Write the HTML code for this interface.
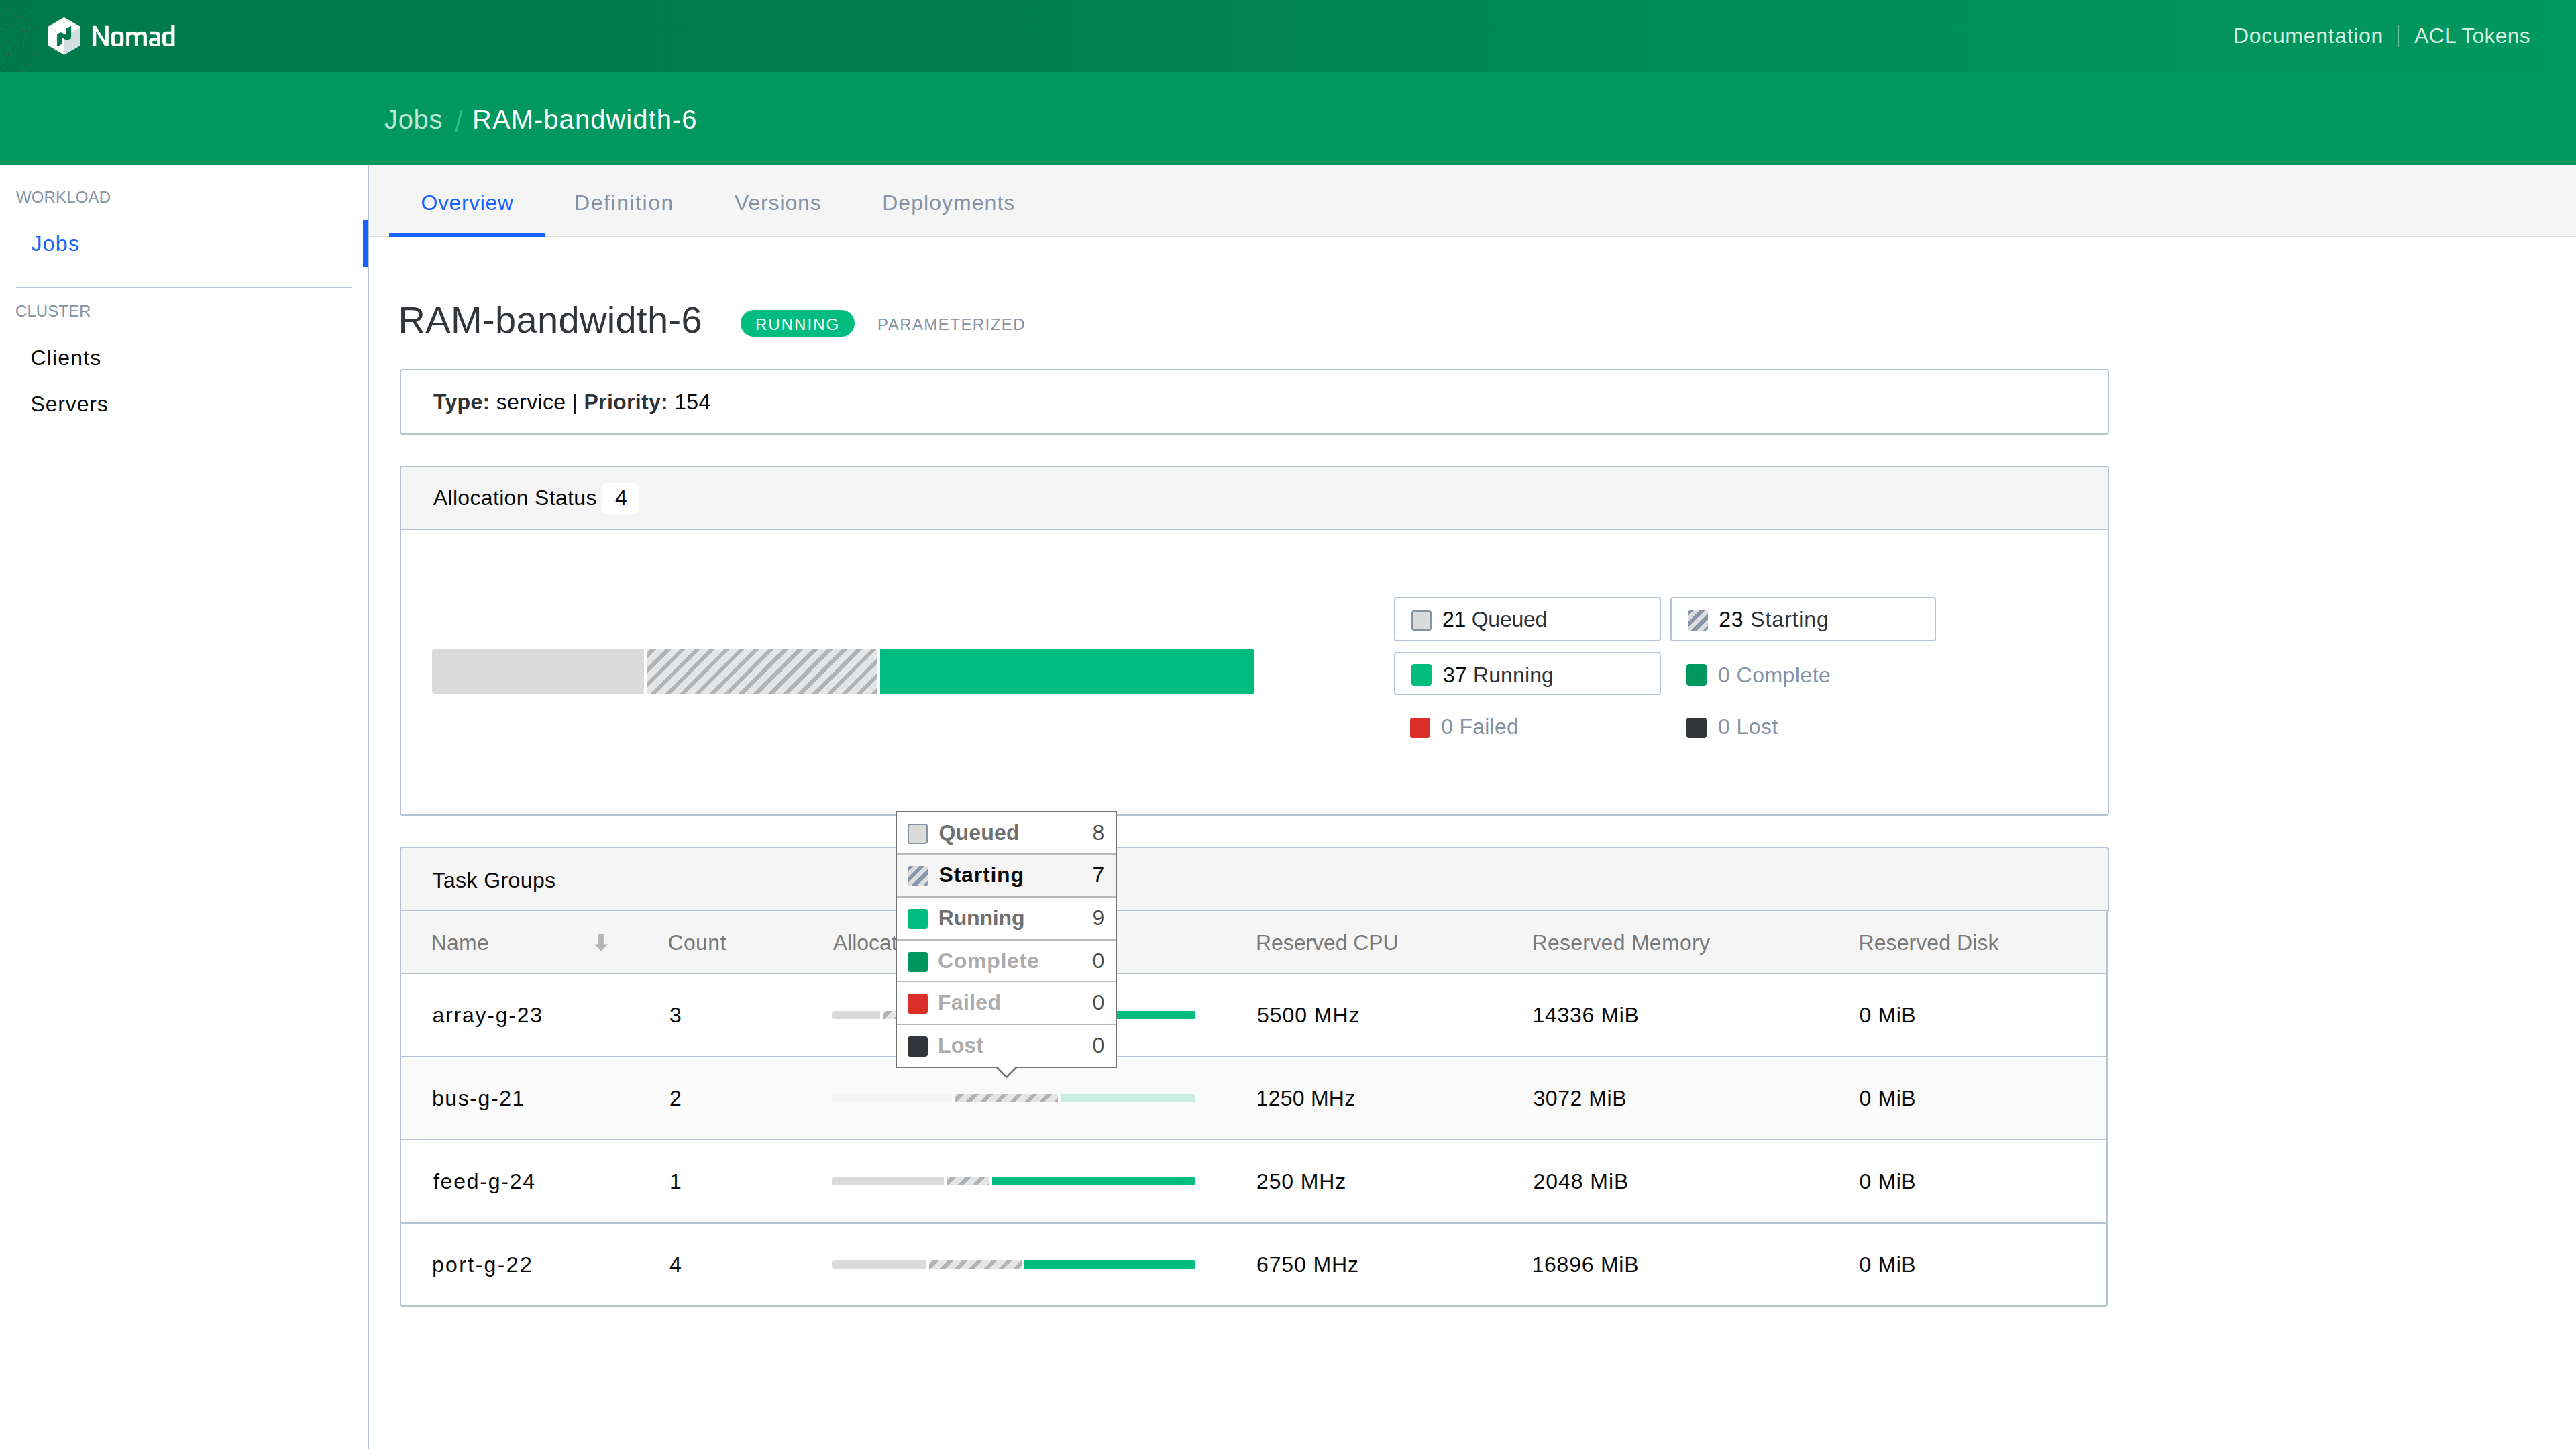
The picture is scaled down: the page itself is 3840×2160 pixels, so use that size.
<!DOCTYPE html>
<html><head><meta charset="utf-8"><style>
html,body{margin:0;padding:0;}
body{width:3840px;height:2160px;overflow:hidden;position:relative;background:#fff;font-family:"Liberation Sans", sans-serif;}
.t{position:absolute;white-space:nowrap;}
.r{position:absolute;}
@media (max-width: 2000px) { body { zoom: 0.5; } }

</style></head><body>
<div class="r" style="left:0px;top:0px;width:3840px;height:108px;background:linear-gradient(to right,#007a4d 0%,#007c4e 30%,#008d58 70%,#00985f 100%);"></div>
<div class="r" style="left:0px;top:108px;width:3840px;height:138px;background:#00985f;"></div>
<svg class="r" style="left:0;top:0" width="56" height="108" viewBox="0 0 56 108"><g fill="#3a3d3b" fill-opacity="0.9"><rect x="4" y="5" width="1" height="1"/><rect x="12" y="5" width="1" height="1"/><rect x="19" y="6" width="1" height="1"/><rect x="25" y="6" width="1" height="1"/><rect x="32" y="6" width="1" height="1"/><rect x="39" y="5" width="1" height="1"/><rect x="47" y="7" width="1" height="1"/><rect x="4" y="10" width="1" height="1"/><rect x="12" y="12" width="1" height="1"/><rect x="19" y="11" width="1" height="1"/><rect x="27" y="10" width="1" height="1"/><rect x="34" y="10" width="1" height="1"/><rect x="39" y="10" width="1" height="1"/><rect x="46" y="12" width="1" height="1"/><rect x="4" y="16" width="1" height="1"/><rect x="12" y="16" width="1" height="1"/><rect x="19" y="15" width="1" height="1"/><rect x="25" y="15" width="1" height="1"/><rect x="34" y="16" width="1" height="1"/><rect x="39" y="16" width="1" height="1"/><rect x="47" y="15" width="1" height="1"/><rect x="6" y="22" width="1" height="1"/><rect x="11" y="21" width="1" height="1"/><rect x="19" y="22" width="1" height="1"/><rect x="27" y="20" width="1" height="1"/><rect x="34" y="20" width="1" height="1"/><rect x="40" y="22" width="1" height="1"/><rect x="46" y="21" width="1" height="1"/><rect x="4" y="27" width="1" height="1"/><rect x="13" y="26" width="1" height="1"/><rect x="20" y="25" width="1" height="1"/><rect x="27" y="26" width="1" height="1"/><rect x="33" y="26" width="1" height="1"/><rect x="41" y="27" width="1" height="1"/><rect x="47" y="26" width="1" height="1"/><rect x="4" y="32" width="1" height="1"/><rect x="12" y="32" width="1" height="1"/><rect x="20" y="30" width="1" height="1"/><rect x="26" y="32" width="1" height="1"/><rect x="32" y="31" width="1" height="1"/><rect x="39" y="30" width="1" height="1"/><rect x="46" y="32" width="1" height="1"/><rect x="4" y="35" width="1" height="1"/><rect x="12" y="37" width="1" height="1"/><rect x="18" y="36" width="1" height="1"/><rect x="26" y="37" width="1" height="1"/><rect x="34" y="37" width="1" height="1"/><rect x="39" y="36" width="1" height="1"/><rect x="47" y="37" width="1" height="1"/><rect x="6" y="40" width="1" height="1"/><rect x="11" y="40" width="1" height="1"/><rect x="18" y="41" width="1" height="1"/><rect x="26" y="40" width="1" height="1"/><rect x="32" y="41" width="1" height="1"/><rect x="40" y="41" width="1" height="1"/><rect x="48" y="42" width="1" height="1"/><rect x="5" y="46" width="1" height="1"/><rect x="13" y="45" width="1" height="1"/><rect x="20" y="47" width="1" height="1"/><rect x="27" y="47" width="1" height="1"/><rect x="33" y="46" width="1" height="1"/><rect x="39" y="46" width="1" height="1"/><rect x="46" y="45" width="1" height="1"/><rect x="4" y="50" width="1" height="1"/><rect x="12" y="50" width="1" height="1"/><rect x="18" y="50" width="1" height="1"/><rect x="25" y="51" width="1" height="1"/><rect x="32" y="52" width="1" height="1"/><rect x="40" y="50" width="1" height="1"/><rect x="46" y="51" width="1" height="1"/><rect x="5" y="55" width="1" height="1"/><rect x="13" y="57" width="1" height="1"/><rect x="19" y="56" width="1" height="1"/><rect x="25" y="55" width="1" height="1"/><rect x="33" y="55" width="1" height="1"/><rect x="41" y="55" width="1" height="1"/><rect x="46" y="57" width="1" height="1"/><rect x="5" y="60" width="1" height="1"/><rect x="12" y="60" width="1" height="1"/><rect x="19" y="62" width="1" height="1"/><rect x="27" y="62" width="1" height="1"/><rect x="32" y="61" width="1" height="1"/><rect x="39" y="62" width="1" height="1"/><rect x="47" y="62" width="1" height="1"/><rect x="4" y="65" width="1" height="1"/><rect x="13" y="67" width="1" height="1"/><rect x="20" y="67" width="1" height="1"/><rect x="27" y="67" width="1" height="1"/><rect x="32" y="66" width="1" height="1"/><rect x="40" y="65" width="1" height="1"/><rect x="46" y="65" width="1" height="1"/><rect x="4" y="72" width="1" height="1"/><rect x="13" y="71" width="1" height="1"/><rect x="20" y="72" width="1" height="1"/><rect x="27" y="71" width="1" height="1"/><rect x="32" y="70" width="1" height="1"/><rect x="39" y="70" width="1" height="1"/><rect x="47" y="72" width="1" height="1"/><rect x="6" y="76" width="1" height="1"/><rect x="12" y="77" width="1" height="1"/><rect x="18" y="76" width="1" height="1"/><rect x="27" y="77" width="1" height="1"/><rect x="34" y="76" width="1" height="1"/><rect x="39" y="77" width="1" height="1"/><rect x="46" y="77" width="1" height="1"/><rect x="6" y="81" width="1" height="1"/><rect x="12" y="82" width="1" height="1"/><rect x="20" y="80" width="1" height="1"/><rect x="25" y="80" width="1" height="1"/><rect x="34" y="82" width="1" height="1"/><rect x="39" y="82" width="1" height="1"/><rect x="48" y="81" width="1" height="1"/><rect x="5" y="86" width="1" height="1"/><rect x="11" y="85" width="1" height="1"/><rect x="20" y="86" width="1" height="1"/><rect x="26" y="87" width="1" height="1"/><rect x="33" y="87" width="1" height="1"/><rect x="41" y="85" width="1" height="1"/><rect x="46" y="85" width="1" height="1"/><rect x="4" y="91" width="1" height="1"/><rect x="11" y="91" width="1" height="1"/><rect x="18" y="92" width="1" height="1"/><rect x="26" y="91" width="1" height="1"/><rect x="33" y="92" width="1" height="1"/><rect x="40" y="92" width="1" height="1"/><rect x="47" y="91" width="1" height="1"/><rect x="5" y="95" width="1" height="1"/><rect x="12" y="95" width="1" height="1"/><rect x="18" y="97" width="1" height="1"/><rect x="25" y="96" width="1" height="1"/><rect x="34" y="96" width="1" height="1"/><rect x="39" y="96" width="1" height="1"/><rect x="47" y="97" width="1" height="1"/><rect x="4" y="101" width="1" height="1"/><rect x="11" y="100" width="1" height="1"/><rect x="20" y="101" width="1" height="1"/><rect x="26" y="102" width="1" height="1"/><rect x="34" y="101" width="1" height="1"/><rect x="40" y="101" width="1" height="1"/><rect x="47" y="102" width="1" height="1"/><rect x="5" y="106" width="1" height="1"/><rect x="12" y="107" width="1" height="1"/><rect x="20" y="107" width="1" height="1"/><rect x="27" y="105" width="1" height="1"/><rect x="33" y="107" width="1" height="1"/><rect x="41" y="105" width="1" height="1"/><rect x="46" y="106" width="1" height="1"/></g></svg>
<svg class="r" style="left:70px;top:25px" width="52" height="58" viewBox="70 25 52 58">
<polygon points="95.5,25.8 119.9,40 119.9,67.6 95.5,81.8 71.4,67.6 71.4,40" fill="#ffffff"/>
<polygon points="95.5,54.5 119.9,40.3 119.9,67.6 95.5,81.8" fill="#d3dfdf"/>
<line x1="72" y1="40.5" x2="86" y2="48.5" stroke="#cfd8dc" stroke-width="0.9"/>
<polygon points="85.1,50.9 90.4,48 98.6,51.6 98.6,42.2 106.1,38.8 106.1,57.2 99.6,59.9 92.1,56 92.1,65.7 85.1,69.5" fill="#007a4d"/>
</svg>
<svg class="r" style="left:134px;top:34px" width="130" height="38" viewBox="134 34 130 38"><g fill="#ffffff" fill-rule="evenodd">
<path d="M137.9,38.7 H143.2 L156.4,60.6 V38.7 H161.8 V68.9 H156.5 L143.3,47 V68.9 H137.9 Z"/>
<path d="M172,46.8 H178.2 Q184.3,46.8 184.3,53 V62.9 Q184.3,69.1 178.2,69.1 H172 Q165.9,69.1 165.9,62.9 V53 Q165.9,46.8 172,46.8 Z M173.4,51.2 Q170.8,51.2 170.8,53.8 V62.2 Q170.8,64.8 173.4,64.8 H176.6 Q179.2,64.8 179.2,62.2 V53.8 Q179.2,51.2 176.6,51.2 Z"/>
<path d="M188.2,68.9 V47.2 H193.1 V48.6 Q195.2,46.8 198.8,46.8 Q202.6,46.8 204.3,48.8 Q206.6,46.8 211,46.8 Q218.9,46.8 218.9,53.6 V68.9 H213.7 V54.4 Q213.7,51.4 210.8,51.4 Q208,51.4 205.8,53 V68.9 H200.9 V54.4 Q200.9,51.4 198,51.4 Q195.3,51.4 193.1,53 V68.9 Z"/>
<path d="M223.4,46.8 H232.6 Q239,46.8 239,53.4 V68.9 H234.4 V67.4 Q232.4,69.1 228.6,69.1 Q222.1,69.1 222.1,62.8 Q222.1,56.6 228.6,56.6 H234.1 V53.6 Q234.1,51.2 231.6,51.2 H223.4 Z M229.2,60.7 Q226.8,60.7 226.8,62.8 Q226.8,64.9 229.2,64.9 H234.1 V60.7 Z"/>
<path d="M248.2,46.8 H255.3 V38 L260.4,37 V68.9 H248.2 Q242,68.9 242,62.6 V53.1 Q242,46.8 248.2,46.8 Z M250,51.2 Q247.3,51.2 247.3,53.9 V62.1 Q247.3,64.7 250,64.7 H255.3 V51.2 Z"/>
</g></svg>
<div class="t" id="doc" style="left:3329.00px;top:36.91px;font-size:32px;line-height:32px;color:#d3eee2;letter-spacing:0.667px;">Documentation</div>
<div class="r" style="left:3574px;top:38px;width:2px;height:32px;background:#6fc6a0;"></div>
<div class="t" id="acl" style="left:3599.00px;top:36.91px;font-size:32px;line-height:32px;color:#d3eee2;letter-spacing:0.222px;">ACL Tokens</div>
<div class="t" id="crumbjobs" style="left:573.00px;top:157.84px;font-size:40px;line-height:40px;color:#bfe6d5;letter-spacing:0.666px;">Jobs</div>
<svg class="r" style="left:674px;top:160px" width="20" height="42" viewBox="674 160 20 42"><polygon points="686.6,164 689.8,164 681.2,197 678,197" fill="#22c38a"/></svg>
<div class="t" id="crumbram" style="left:704.00px;top:157.84px;font-size:40px;line-height:40px;color:#ffffff;letter-spacing:1.030px;">RAM-bandwidth-6</div>
<div class="r" style="left:548px;top:246px;width:2px;height:1914px;background:#b6c2d2;"></div>
<div class="t" id="workload" style="left:24.00px;top:282.28px;font-size:24px;line-height:24px;color:#8592a4;letter-spacing:0.143px;">WORKLOAD</div>
<div class="t" id="sidejobs" style="left:46.50px;top:347.31px;font-size:32px;line-height:32px;color:#1563ff;letter-spacing:1.266px;">Jobs</div>
<div class="r" style="left:541px;top:328px;width:7px;height:70px;background:#1563ff;"></div>
<div class="r" style="left:24px;top:428px;width:500px;height:2px;background:#b6c2d2;"></div>
<div class="t" id="cluster" style="left:23.00px;top:452.08px;font-size:24px;line-height:24px;color:#8592a4;letter-spacing:0.068px;">CLUSTER</div>
<div class="t" id="clients" style="left:45.50px;top:516.91px;font-size:32px;line-height:32px;color:#0a0a0a;letter-spacing:1.166px;">Clients</div>
<div class="t" id="servers" style="left:45.50px;top:585.51px;font-size:32px;line-height:32px;color:#0a0a0a;letter-spacing:0.834px;">Servers</div>
<div class="r" style="left:550px;top:246px;width:3290px;height:106px;background:#f5f5f5;"></div>
<div class="r" style="left:550px;top:352px;width:3290px;height:2px;background:#dbdbdb;"></div>
<div class="r" style="left:580px;top:347px;width:232px;height:7px;background:#1563ff;"></div>
<div class="t" id="tab1" style="left:627.50px;top:285.51px;font-size:32px;line-height:32px;color:#1563ff;letter-spacing:0.572px;">Overview</div>
<div class="t" id="tab2" style="left:856.00px;top:285.51px;font-size:32px;line-height:32px;color:#8592a4;letter-spacing:1.556px;">Definition</div>
<div class="t" id="tab3" style="left:1095.00px;top:285.51px;font-size:32px;line-height:32px;color:#8592a4;letter-spacing:0.857px;">Versions</div>
<div class="t" id="tab4" style="left:1315.20px;top:285.51px;font-size:32px;line-height:32px;color:#8592a4;letter-spacing:1.040px;">Deployments</div>
<div class="t" id="title" style="left:593.50px;top:449.10px;font-size:56px;line-height:56px;color:#33373b;letter-spacing:0.357px;">RAM-bandwidth-6</div>
<div class="r" style="left:1104px;top:462px;width:170px;height:40px;background:#00bc7f;border-radius:20px;"></div>
<div class="t" id="running" style="left:1126.00px;top:472.28px;font-size:24px;line-height:24px;color:#ffffff;letter-spacing:2.033px;">RUNNING</div>
<div class="t" id="param" style="left:1308.00px;top:471.68px;font-size:24px;line-height:24px;color:#8592a4;letter-spacing:1.450px;">PARAMETERIZED</div>
<div class="r" style="left:596px;top:550px;width:2548px;height:98px;border:2px solid #b6c2d2;border-radius:4px;box-sizing:border-box;background:#fff;"></div>
<div class="t" id="type" style="left:646.00px;top:582.91px;font-size:32px;line-height:32px;color:#0a0a0a;letter-spacing:0.321px;"><b style="color:#2f3337">Type:</b> service | <b style="color:#2f3337">Priority:</b> 154</div>
<div class="r" style="left:596px;top:694px;width:2548px;height:522px;border:2px solid #b6c2d2;border-radius:4px;box-sizing:border-box;background:#fff;"></div>
<div class="r" style="left:598px;top:696px;width:2544px;height:92px;background:#f5f5f5;border-radius:2px 2px 0 0;"></div>
<div class="r" style="left:598px;top:788px;width:2544px;height:2px;background:#b6c2d2;"></div>
<div class="t" id="allocst" style="left:645.80px;top:725.61px;font-size:32px;line-height:32px;color:#0a0a0a;letter-spacing:0.327px;">Allocation Status</div>
<div class="r" style="left:898px;top:720px;width:54px;height:46px;background:#ffffff;border-radius:6px;"></div>
<div class="t" id="four" style="left:917.00px;top:725.61px;font-size:32px;line-height:32px;color:#0a0a0a;">4</div>
<div class="r" style="left:644px;top:968px;width:316px;height:66px;background:#dbdbdb;border-radius:3px 0 0 3px;"></div>
<div class="r" style="left:964px;top:968px;width:344px;height:66px;background:repeating-linear-gradient(135deg,#e4e5e6 0px,#e4e5e6 4px,#b1b3b5 4px,#b1b3b5 10px,#e4e5e6 10px,#e4e5e6 15.5px);"></div>
<div class="r" style="left:1312px;top:968px;width:558px;height:66px;background:#00bc7f;border-radius:0 3px 3px 0;"></div>
<div class="r" style="left:2078px;top:890px;width:398px;height:66px;border:2px solid #b6c2d2;border-radius:4px;box-sizing:border-box;"></div>
<div class="r" style="left:2490px;top:890px;width:396px;height:66px;border:2px solid #b6c2d2;border-radius:4px;box-sizing:border-box;"></div>
<div class="r" style="left:2078px;top:972px;width:398px;height:64px;border:2px solid #b6c2d2;border-radius:4px;box-sizing:border-box;"></div>
<div class="r" style="left:2104px;top:910px;width:30px;height:30px;border-radius:4px;box-sizing:border-box;background:#dbdbdb;border:2px solid #8592a4;"></div>
<div class="t" id="lg1" style="left:2150.00px;top:906.91px;font-size:32px;line-height:32px;color:#0a0a0a;letter-spacing:-0.253px;">21 <span style="color:#2f3337">Queued</span></div>
<div class="r" style="left:2516px;top:910px;width:30px;height:30px;border-radius:4px;box-sizing:border-box;background:repeating-linear-gradient(135deg,#8796ab 0px,#8796ab 6px,#dcdcdc 6px,#dcdcdc 12.3px);"></div>
<div class="t" id="lg2" style="left:2562.20px;top:906.91px;font-size:32px;line-height:32px;color:#0a0a0a;letter-spacing:0.880px;">23 <span style="color:#2f3337">Starting</span></div>
<div class="r" style="left:2104px;top:990px;width:30px;height:31.5px;border-radius:4px;background:#00bc7f;"></div>
<div class="t" id="lg3" style="left:2151.00px;top:989.61px;font-size:32px;line-height:32px;color:#0a0a0a;letter-spacing:0.135px;">37 <span style="color:#2f3337">Running</span></div>
<div class="r" style="left:2514px;top:990px;width:30px;height:31.5px;border-radius:4px;background:#00965f;"></div>
<div class="t" id="lg4" style="left:2561.00px;top:989.61px;font-size:32px;line-height:32px;color:#8592a4;letter-spacing:0.468px;">0 Complete</div>
<div class="r" style="left:2102px;top:1070px;width:30px;height:30px;border-radius:4px;box-sizing:border-box;background:#da2e29;"></div>
<div class="t" id="lg5" style="left:2148.20px;top:1067.21px;font-size:32px;line-height:32px;color:#8592a4;letter-spacing:0.258px;">0 Failed</div>
<div class="r" style="left:2514px;top:1070px;width:30px;height:30px;border-radius:4px;box-sizing:border-box;background:#33363a;"></div>
<div class="t" id="lg6" style="left:2561.00px;top:1067.21px;font-size:32px;line-height:32px;color:#8592a4;letter-spacing:0.400px;">0 Lost</div>
<div class="r" style="left:596px;top:1262px;width:2548px;height:96px;border:2px solid #b6c2d2;border-bottom:none;border-radius:4px 4px 0 0;box-sizing:border-box;background:#f5f5f5;"></div>
<div class="r" style="left:596px;top:1356px;width:2548px;height:2px;background:#b6c2d2;"></div>
<div class="t" id="tg" style="left:644.50px;top:1295.51px;font-size:32px;line-height:32px;color:#0a0a0a;letter-spacing:0.400px;">Task Groups</div>
<div class="r" style="left:596px;top:1358px;width:2546px;height:590px;border:2px solid #b6c2d2;border-top:none;border-radius:0 0 4px 4px;box-sizing:border-box;background:#fff;"></div>
<div class="r" style="left:598px;top:1358px;width:2542px;height:92px;background:#f5f5f5;"></div>
<div class="r" style="left:598px;top:1450px;width:2542px;height:2px;background:#b6c2d2;"></div>
<div class="t" id="hname" style="left:642.50px;top:1389.31px;font-size:32px;line-height:32px;color:#7a7a7a;letter-spacing:0.333px;">Name</div>
<svg class="r" style="left:884px;top:1390px" width="24" height="30" viewBox="884 1390 24 30"><polygon points="892.1,1392.9 899.8,1392.9 899.8,1407.6 905.9,1407.6 896.1,1417.8 886.2,1407.6 892.1,1407.6" fill="#b5b5b5"/></svg>
<div class="t" id="hcount" style="left:995.50px;top:1389.31px;font-size:32px;line-height:32px;color:#7a7a7a;letter-spacing:0.350px;">Count</div>
<div class="t" id="halloc" style="left:1241.70px;top:1389.31px;font-size:32px;line-height:32px;color:#7a7a7a;">Allocations</div>
<div class="t" id="hcpu" style="left:1872.00px;top:1389.31px;font-size:32px;line-height:32px;color:#7a7a7a;letter-spacing:-0.071px;">Reserved CPU</div>
<div class="t" id="hmem" style="left:2283.50px;top:1389.31px;font-size:32px;line-height:32px;color:#7a7a7a;letter-spacing:0.286px;">Reserved Memory</div>
<div class="t" id="hdisk" style="left:2770.50px;top:1389.31px;font-size:32px;line-height:32px;color:#7a7a7a;letter-spacing:0.083px;">Reserved Disk</div>
<div class="r" style="left:598px;top:1574px;width:2542px;height:2px;background:#b6c2d2;"></div>
<div class="t" id="rn0" style="left:644.50px;top:1497.41px;font-size:32px;line-height:32px;color:#0a0a0a;letter-spacing:1.777px;">array-g-23</div>
<div class="t" id="rc0" style="left:998.00px;top:1497.41px;font-size:32px;line-height:32px;color:#0a0a0a;">3</div>
<div class="t" id="rcpu0" style="left:1874.00px;top:1497.41px;font-size:32px;line-height:32px;color:#0a0a0a;letter-spacing:0.944px;">5500 MHz</div>
<div class="t" id="rmem0" style="left:2284.50px;top:1497.41px;font-size:32px;line-height:32px;color:#0a0a0a;letter-spacing:0.678px;">14336 MiB</div>
<div class="t" id="rdisk0" style="left:2771.50px;top:1497.41px;font-size:32px;line-height:32px;color:#0a0a0a;letter-spacing:0.600px;">0 MiB</div>
<div class="r" style="left:1240px;top:1507px;width:72px;height:12px;background:#dbdbdb;border-radius:3px 0 0 3px;"></div>
<div class="r" style="left:1316px;top:1507px;width:218px;height:12px;background:repeating-linear-gradient(135deg,#e4e5e6 0px,#e4e5e6 4px,#b1b3b5 4px,#b1b3b5 10px,#e4e5e6 10px,#e4e5e6 15.5px);"></div>
<div class="r" style="left:1538px;top:1507px;width:244px;height:12px;background:#00bc7f;border-radius:0 3px 3px 0;"></div>
<div class="r" style="left:598px;top:1576px;width:2542px;height:122px;background:#fafafa;"></div>
<div class="r" style="left:598px;top:1698px;width:2542px;height:2px;background:#b6c2d2;"></div>
<div class="t" id="rn1" style="left:643.90px;top:1621.41px;font-size:32px;line-height:32px;color:#0a0a0a;letter-spacing:1.599px;">bus-g-21</div>
<div class="t" id="rc1" style="left:998.00px;top:1621.41px;font-size:32px;line-height:32px;color:#0a0a0a;">2</div>
<div class="t" id="rcpu1" style="left:1872.60px;top:1621.41px;font-size:32px;line-height:32px;color:#0a0a0a;letter-spacing:0.256px;">1250 MHz</div>
<div class="t" id="rmem1" style="left:2285.50px;top:1621.41px;font-size:32px;line-height:32px;color:#0a0a0a;letter-spacing:0.543px;">3072 MiB</div>
<div class="t" id="rdisk1" style="left:2771.50px;top:1621.41px;font-size:32px;line-height:32px;color:#0a0a0a;letter-spacing:0.600px;">0 MiB</div>
<div class="r" style="left:1240px;top:1631px;width:179px;height:12px;background:#dbdbdb;border-radius:3px 0 0 3px;opacity:0.2;"></div>
<div class="r" style="left:1423px;top:1631px;width:154px;height:12px;background:repeating-linear-gradient(135deg,#e4e5e6 0px,#e4e5e6 4px,#b1b3b5 4px,#b1b3b5 10px,#e4e5e6 10px,#e4e5e6 15.5px);"></div>
<div class="r" style="left:1581px;top:1631px;width:201px;height:12px;background:#00bc7f;border-radius:0 3px 3px 0;opacity:0.2;"></div>
<div class="r" style="left:598px;top:1822px;width:2542px;height:2px;background:#b6c2d2;"></div>
<div class="t" id="rn2" style="left:645.90px;top:1745.41px;font-size:32px;line-height:32px;color:#0a0a0a;letter-spacing:1.778px;">feed-g-24</div>
<div class="t" id="rc2" style="left:998.00px;top:1745.41px;font-size:32px;line-height:32px;color:#0a0a0a;">1</div>
<div class="t" id="rcpu2" style="left:1873.00px;top:1745.41px;font-size:32px;line-height:32px;color:#0a0a0a;letter-spacing:0.867px;">250 MHz</div>
<div class="t" id="rmem2" style="left:2285.50px;top:1745.41px;font-size:32px;line-height:32px;color:#0a0a0a;letter-spacing:0.944px;">2048 MiB</div>
<div class="t" id="rdisk2" style="left:2771.50px;top:1745.41px;font-size:32px;line-height:32px;color:#0a0a0a;letter-spacing:0.600px;">0 MiB</div>
<div class="r" style="left:1240px;top:1755px;width:167px;height:12px;background:#dbdbdb;border-radius:3px 0 0 3px;"></div>
<div class="r" style="left:1411px;top:1755px;width:64px;height:12px;background:repeating-linear-gradient(135deg,#e4e5e6 0px,#e4e5e6 4px,#b1b3b5 4px,#b1b3b5 10px,#e4e5e6 10px,#e4e5e6 15.5px);"></div>
<div class="r" style="left:1479px;top:1755px;width:303px;height:12px;background:#00bc7f;border-radius:0 3px 3px 0;"></div>
<div class="t" id="rn3" style="left:643.90px;top:1869.41px;font-size:32px;line-height:32px;color:#0a0a0a;letter-spacing:2.375px;">port-g-22</div>
<div class="t" id="rc3" style="left:998.00px;top:1869.41px;font-size:32px;line-height:32px;color:#0a0a0a;">4</div>
<div class="t" id="rcpu3" style="left:1873.00px;top:1869.41px;font-size:32px;line-height:32px;color:#0a0a0a;letter-spacing:0.885px;">6750 MHz</div>
<div class="t" id="rmem3" style="left:2283.50px;top:1869.41px;font-size:32px;line-height:32px;color:#0a0a0a;letter-spacing:0.750px;">16896 MiB</div>
<div class="t" id="rdisk3" style="left:2771.50px;top:1869.41px;font-size:32px;line-height:32px;color:#0a0a0a;letter-spacing:0.600px;">0 MiB</div>
<div class="r" style="left:1240px;top:1879px;width:141px;height:12px;background:#dbdbdb;border-radius:3px 0 0 3px;"></div>
<div class="r" style="left:1385px;top:1879px;width:138px;height:12px;background:repeating-linear-gradient(135deg,#e4e5e6 0px,#e4e5e6 4px,#b1b3b5 4px,#b1b3b5 10px,#e4e5e6 10px,#e4e5e6 15.5px);"></div>
<div class="r" style="left:1527px;top:1879px;width:255px;height:12px;background:#00bc7f;border-radius:0 3px 3px 0;"></div>
<div class="r" style="left:1335px;top:1209px;width:330px;height:383px;border:2px solid #747474;box-sizing:border-box;background:#fff;"></div>
<div class="r" style="left:1337px;top:1272px;width:326px;height:2px;background:#b9b9b9;"></div>
<div class="r" style="left:1353px;top:1228px;width:30px;height:30px;border-radius:4px;box-sizing:border-box;background:#dbdbdb;border:2px solid #8592a4;"></div>
<div class="t" id="pl0" style="left:1399.50px;top:1224.91px;font-size:32px;line-height:32px;color:#707070;font-weight:700;letter-spacing:0.160px;">Queued</div>
<div class="t" id="pn0" style="left:1628.60px;top:1224.91px;font-size:32px;line-height:32px;color:#4a4a4a;">8</div>
<div class="r" style="left:1337px;top:1274px;width:326px;height:62px;background:#f5f5f5;"></div>
<div class="r" style="left:1337px;top:1336px;width:326px;height:2px;background:#b9b9b9;"></div>
<div class="r" style="left:1353px;top:1291px;width:30px;height:30px;border-radius:4px;box-sizing:border-box;background:repeating-linear-gradient(135deg,#8796ab 0px,#8796ab 6px,#dcdcdc 6px,#dcdcdc 12.3px);"></div>
<div class="t" id="pl1" style="left:1399.50px;top:1287.91px;font-size:32px;line-height:32px;color:#0a0a0a;font-weight:700;letter-spacing:0.799px;">Starting</div>
<div class="t" id="pn1" style="left:1628.60px;top:1287.91px;font-size:32px;line-height:32px;color:#0a0a0a;">7</div>
<div class="r" style="left:1337px;top:1400px;width:326px;height:2px;background:#b9b9b9;"></div>
<div class="r" style="left:1353px;top:1355px;width:30px;height:30px;border-radius:4px;box-sizing:border-box;background:#00bc7f;"></div>
<div class="t" id="pl2" style="left:1398.80px;top:1351.91px;font-size:32px;line-height:32px;color:#707070;font-weight:700;letter-spacing:-0.184px;">Running</div>
<div class="t" id="pn2" style="left:1628.60px;top:1351.91px;font-size:32px;line-height:32px;color:#4a4a4a;">9</div>
<div class="r" style="left:1337px;top:1462px;width:326px;height:2px;background:#b9b9b9;"></div>
<div class="r" style="left:1353px;top:1419px;width:30px;height:30px;border-radius:4px;box-sizing:border-box;background:#00965f;"></div>
<div class="t" id="pl3" style="left:1398.00px;top:1415.91px;font-size:32px;line-height:32px;color:#acacac;font-weight:700;letter-spacing:0.700px;">Complete</div>
<div class="t" id="pn3" style="left:1628.60px;top:1415.91px;font-size:32px;line-height:32px;color:#4a4a4a;">0</div>
<div class="r" style="left:1337px;top:1526px;width:326px;height:2px;background:#b9b9b9;"></div>
<div class="r" style="left:1353px;top:1481px;width:30px;height:30px;border-radius:4px;box-sizing:border-box;background:#da2e29;"></div>
<div class="t" id="pl4" style="left:1398.00px;top:1477.91px;font-size:32px;line-height:32px;color:#acacac;font-weight:700;letter-spacing:0.300px;">Failed</div>
<div class="t" id="pn4" style="left:1628.60px;top:1477.91px;font-size:32px;line-height:32px;color:#4a4a4a;">0</div>
<div class="r" style="left:1353px;top:1545px;width:30px;height:30px;border-radius:4px;box-sizing:border-box;background:#33363a;"></div>
<div class="t" id="pl5" style="left:1398.00px;top:1541.91px;font-size:32px;line-height:32px;color:#acacac;font-weight:700;letter-spacing:0.099px;">Lost</div>
<div class="t" id="pn5" style="left:1628.60px;top:1541.91px;font-size:32px;line-height:32px;color:#4a4a4a;">0</div>
<svg class="r" style="left:1476px;top:1584px" width="50" height="30" viewBox="1476 1584 50 30"><polygon points="1486.5,1590 1514.5,1590 1500.5,1604.5" fill="#fff"/><rect x="1489" y="1590" width="23" height="1" fill="#dcdcdc"/><path d="M1486,1591 L1500.5,1605.6 L1515,1591" fill="none" stroke="#747474" stroke-width="2.6"/></svg>
</body></html>
